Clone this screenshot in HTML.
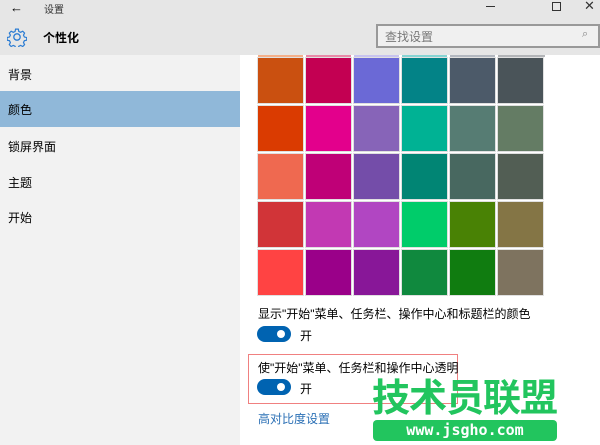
<!DOCTYPE html>
<html><head><meta charset="utf-8"><style>
*{margin:0;padding:0;box-sizing:border-box}
body{width:600px;height:445px;overflow:hidden;background:#fff;font-family:"Liberation Sans","Noto Sans CJK SC",sans-serif;position:relative;font-size:12px;color:#000}
.a{position:absolute}
.hdr{left:0;top:0;width:600px;height:55px;background:#e6e6e6}
.side{left:0;top:55px;width:240px;height:390px;background:#f2f2f2}
.item{left:8px;font-size:12px}
.sw{position:absolute;width:45px;height:45px;outline:1px solid #e0e0e0}
.tg{width:34px;height:16px;border-radius:8px;background:#0063b1}
.tg:after{content:"";position:absolute;right:6px;top:4px;width:8px;height:8px;border-radius:50%;background:#fff}
</style></head><body>
<div class="a hdr"></div>
<div class="a" style="left:10px;top:0px;font-size:13px">←</div>
<div class="a" style="left:44px;top:1px;font-size:10px;color:#333">设置</div>
<div class="a" style="left:486px;top:6px;width:9px;height:1px;background:#333"></div>
<div class="a" style="left:552px;top:2px;width:9px;height:9px;border:1px solid #333"></div>
<div class="a" style="left:584px;top:-2px;font-size:13px;color:#333">✕</div>
<svg class="a" style="left:7px;top:27px" width="20" height="20" viewBox="0 0 20 20"><g fill="none" stroke="#2b7cd3" stroke-width="1.3"><circle cx="10" cy="10" r="3.2"/><path d="M8.5 1.5h3l.5 2.5 2 1 2.3-1.2 2 2-1.2 2.3 1 2 2.5.5v3l-2.5.5-1 2 1.2 2.3-2 2-2.3-1.2-2 1-.5 2.5h-3l-.5-2.5-2-1-2.3 1.2-2-2 1.2-2.3-1-2-2.5-.5v-3l2.5-.5 1-2-1.2-2.3 2-2 2.3 1.2 2-1z" transform="scale(.92) translate(.8 .8)"/></g></svg>
<div class="a" style="left:43px;top:29px;font-size:12px;font-weight:bold">个性化</div>
<div class="a" style="left:376px;top:24px;width:224px;height:24px;border:2px solid #999;background:#f0f0f0"></div>
<div class="a" style="left:385px;top:28px;font-size:12px;color:#777">查找设置</div>
<div class="a" style="left:582px;top:28px;font-size:11px;color:#888">⌕</div>
<div class="a side"></div>
<div class="a" style="left:0;top:91px;width:240px;height:36px;background:#90b8d9"></div>
<div class="a item" style="top:66px">背景</div>
<div class="a item" style="top:101px">颜色</div>
<div class="a item" style="top:138px">锁屏界面</div>
<div class="a item" style="top:174px">主题</div>
<div class="a item" style="top:209px">开始</div>
<div class="a" style="left:258px;top:55px;width:287px;height:2px;background:linear-gradient(90deg,#f4b08a 0 45px,#fff 45px 48px,#e98aa8 48px 93px,#fff 93px 96px,#c8c4ef 96px 141px,#fff 141px 144px,#86d4d3 144px 189px,#fff 189px 192px,#b3b8c0 192px 237px,#fff 237px 240px,#b3b5b8 240px)"></div>
<div id="g"></div>
<div class="a" style="left:258px;top:305px;font-size:12px">显示"开始"菜单、任务栏、操作中心和标题栏的颜色</div>
<div class="a tg" style="left:257px;top:326px"></div>
<div class="a" style="left:300px;top:327px;font-size:12px">开</div>
<div class="a" style="left:248px;top:354px;width:210px;height:50px;border:1px solid #f08080"></div>
<div class="a" style="left:258px;top:359px;font-size:12px">使"开始"菜单、任务栏和操作中心透明</div>
<div class="a tg" style="left:257px;top:379px"></div>
<div class="a" style="left:300px;top:380px;font-size:12px">开</div>
<div class="a" style="left:258px;top:410px;font-size:12px;color:#2a6fb5">高对比度设置</div>
<div class="a" style="left:372px;top:376px;font-size:38px;font-weight:bold;color:#22c55e;letter-spacing:-1px;line-height:46px">技术员联盟</div>
<div class="a" style="left:373px;top:420px;width:184px;height:21px;border-radius:4px;background:#22c55e;color:#fff;font-family:'DejaVu Sans Mono',monospace;font-weight:bold;font-size:15px;text-align:center;line-height:21px">www.jsgho.com</div>
<script>
var c=[["#ca5010","#c30052","#6b69d6","#038387","#4c5a69","#4a5459"],
["#da3b01","#e3008c","#8764b8","#00b294","#567c73","#647c64"],
["#ef6950","#bf0077","#744da9","#018574","#486860","#525e54"],
["#d13438","#c239b3","#b146c2","#00cc6a","#498205","#847545"],
["#ff4343","#9a0089","#881798","#10893e","#107c10","#7e735f"]];
var h="";for(var r=0;r<5;r++)for(var k=0;k<6;k++)h+='<div class="sw" style="left:'+(258+k*48)+'px;top:'+(58+r*48)+'px;background:'+c[r][k]+'"></div>';
document.getElementById("g").innerHTML=h;
</script>
</body></html>
